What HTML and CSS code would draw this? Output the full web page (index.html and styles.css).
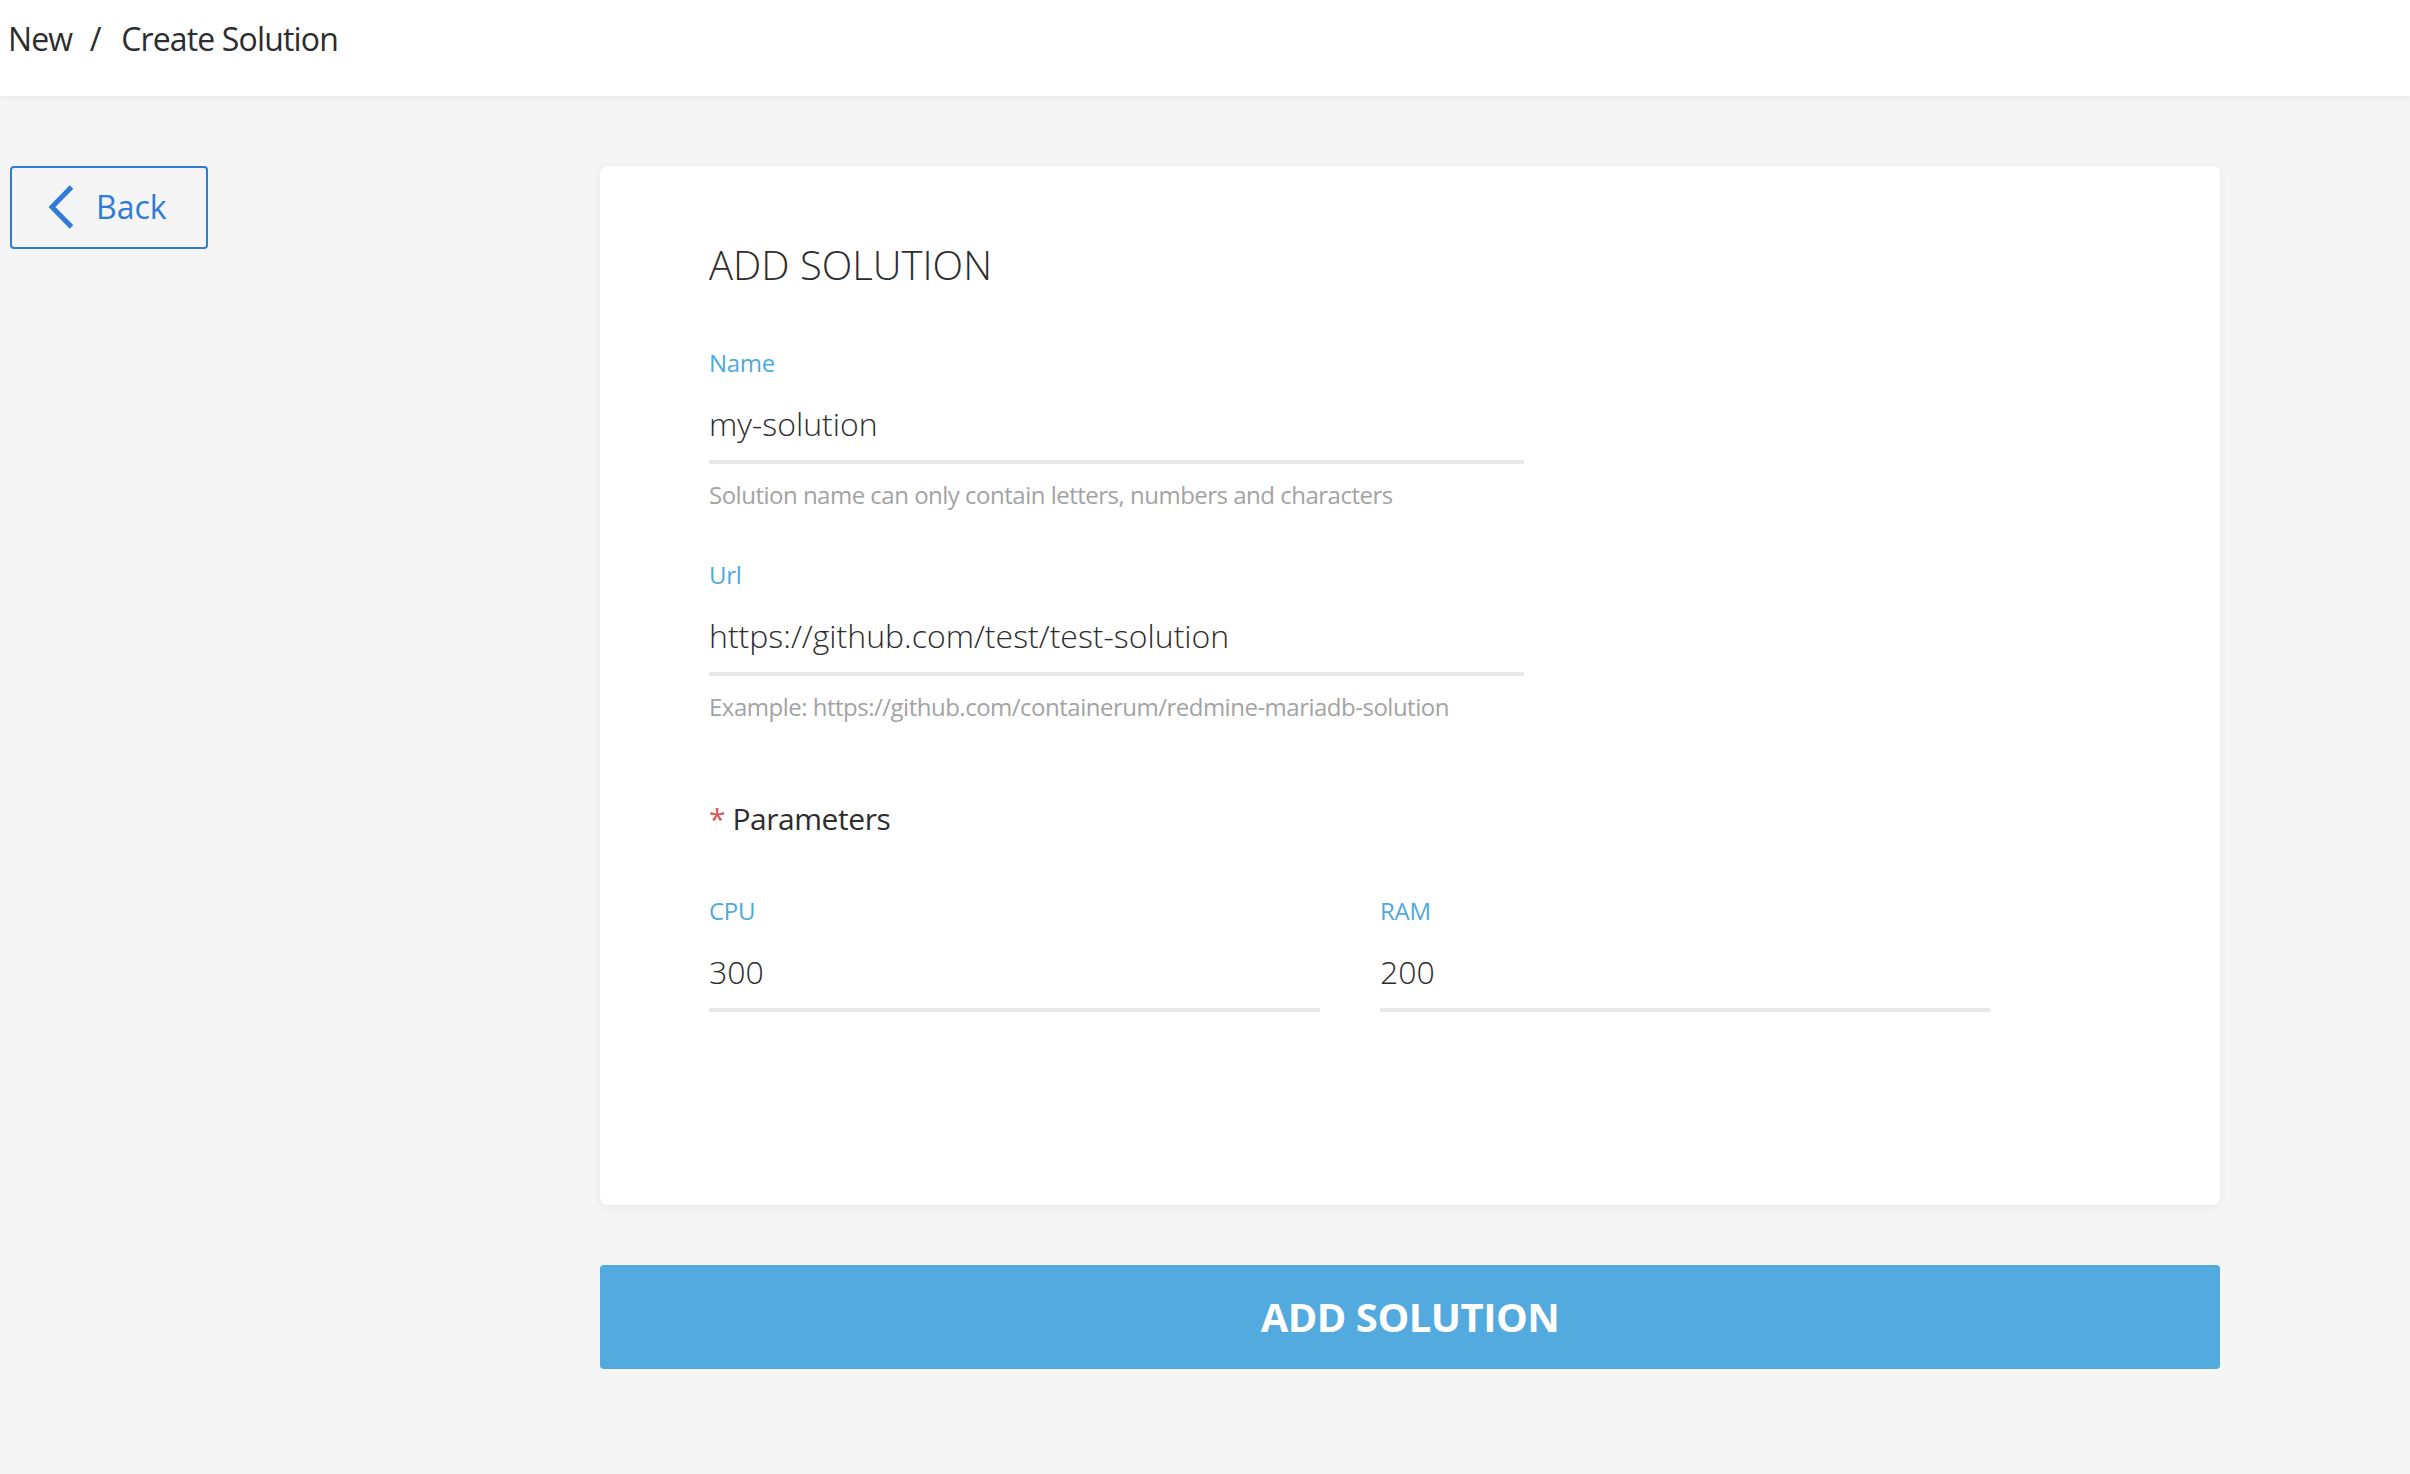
FILE: index.html
```html
<!DOCTYPE html>
<html lang="en">
<head>
<meta charset="utf-8">
<title>Create Solution</title>
<link rel="stylesheet" href="styles.css">
</head>
<body>
<header class="topbar">
  <nav class="breadcrumb">
    <span class="crumb">New</span>
    <span class="sep">/</span>
    <span class="crumb current">Create Solution</span>
  </nav>
</header>
<main class="page">
  <aside class="side">
    <a class="back-btn" href="#">
      <svg class="back-icon" viewBox="0 0 27 44" width="27" height="44" aria-hidden="true"><polyline points="23.5,2 4,22 23.5,42" fill="none" stroke="currentColor" stroke-width="5"/></svg>
      <span class="back-text">Back</span>
    </a>
  </aside>
  <section class="content">
    <div class="card">
      <h1 class="card-title">ADD SOLUTION</h1>
      <div class="field field-wide">
        <div class="field-label">Name</div>
        <div class="field-value">my-solution</div>
        <p class="field-help">Solution name can only contain letters, numbers and characters</p>
      </div>
      <div class="field field-wide field-next">
        <div class="field-label">Url</div>
        <div class="field-value">https://github.com/test/test-solution</div>
        <p class="field-help">Example: https://github.com/containerum/redmine-mariadb-solution</p>
      </div>
      <div class="params-title"><span class="required">*</span> Parameters</div>
      <div class="params-grid">
        <div class="field">
          <div class="field-label">CPU</div>
          <div class="field-value">300</div>
        </div>
        <div class="field">
          <div class="field-label">RAM</div>
          <div class="field-value">200</div>
        </div>
      </div>
    </div>
    <button class="submit-btn" type="button">ADD SOLUTION</button>
  </section>
</main>
</body>
</html>
```

FILE: styles.css
```css
* {
  box-sizing: border-box;
}

html, body {
  margin: 0;
  padding: 0;
}

body {
  background: #f5f5f5;
  font-family: "Open Sans", "Liberation Sans", sans-serif;
  color: #333333;
  min-height: 1474px;
}

.topbar {
  position: relative;
  z-index: 1;
  height: 96px;
  background: #ffffff;
  box-shadow: 0 2px 6px rgba(0, 0, 0, 0.06);
  padding: 17px 8px 0 8px;
}

.breadcrumb {
  font-size: 32px;
  line-height: 44px;
  color: #2d2d2d;
  letter-spacing: -0.85px;
  white-space: nowrap;
}

.sep {
  margin: 0 13px 0 10px;
}

.page {
  display: flex;
  align-items: flex-start;
  padding: 70px 0 0 10px;
}

.side {
  width: 590px;
  flex: none;
}

.back-btn {
  display: flex;
  align-items: center;
  width: 198px;
  height: 83px;
  padding: 0 0 2px 36px;
  border: 2px solid #2f7bd5;
  border-radius: 4px;
  color: #2f7bd5;
  text-decoration: none;
}

.back-icon {
  display: block;
  flex: none;
}

.back-text {
  margin-left: 21px;
  font-size: 32px;
  line-height: 44px;
}

.content {
  width: 1620px;
  flex: none;
}

.card {
  background: #ffffff;
  border-radius: 8px;
  box-shadow: 0 2px 10px rgba(0, 0, 0, 0.06);
  padding: 71px 0 193px 109px;
}

.card-title {
  margin: 0;
  font-size: 40px;
  line-height: 56px;
  font-weight: 300;
  color: #2d2d2d;
}

.field-wide {
  width: 815px;
  margin-top: 54px;
}

.field-next {
  margin-top: 48px;
}

.field-label {
  font-size: 24px;
  line-height: 32px;
  color: #4ea9df;
  letter-spacing: -0.3px;
}

.field-value {
  margin-top: 23px;
  font-size: 32px;
  line-height: 44px;
  font-weight: 300;
  color: #2d2d2d;
  padding-bottom: 14px;
  border-bottom: 4px solid #e8e8e8;
  white-space: nowrap;
}

.field-help {
  margin: 15px 0 0 0;
  font-size: 24px;
  line-height: 32px;
  color: #a3a3a3;
  letter-spacing: -0.5px;
  white-space: nowrap;
}

.params-title {
  margin-top: 76px;
  font-size: 30px;
  line-height: 40px;
  color: #2d2d2d;
  letter-spacing: -0.45px;
}

.required {
  color: #d9534f;
}

.params-grid {
  display: grid;
  grid-template-columns: 611px 610px;
  column-gap: 60px;
  margin-top: 56px;
}

.submit-btn {
  display: block;
  width: 100%;
  height: 104px;
  margin-top: 60px;
  border: none;
  border-radius: 4px;
  background: #53aade;
  color: #ffffff;
  font-family: inherit;
  font-size: 40px;
  font-weight: 700;
  line-height: 104px;
  letter-spacing: -0.5px;
  padding: 0;
  text-transform: uppercase;
}
```
